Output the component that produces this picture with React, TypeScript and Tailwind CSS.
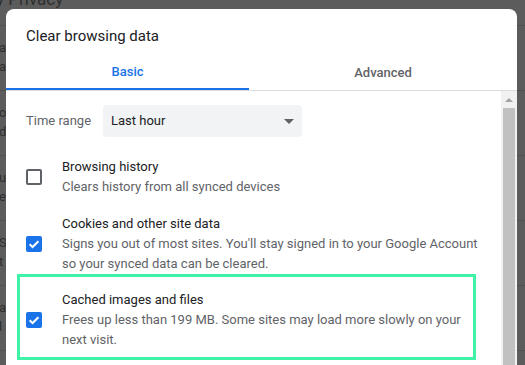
import { ReactNode } from "react";

const font = { fontFamily: "Roboto, 'Liberation Sans', sans-serif" };

function Checkbox({ checked }: { checked: boolean }) {
  if (!checked) {
    return <div className="w-4 h-4 shrink-0 rounded-[2px] border-2 border-[#5f6368]" />;
  }
  return (
    <div className="w-4 h-4 shrink-0 rounded-[2px] bg-[#1a73e8] flex items-center justify-center">
      <svg width="16" height="16" viewBox="0 0 16 16">
        <path d="M3.6 8.2 L6.6 11 L12.4 5.2" fill="none" stroke="#fff" strokeWidth="2" />
      </svg>
    </div>
  );
}

function Option({
  checked,
  title,
  children,
  className = "",
  highlight = false,
}: {
  checked: boolean;
  title: string;
  children: ReactNode;
  className?: string;
  highlight?: boolean;
}) {
  return (
    <div className={`relative flex items-center ${className}`}>
      <Checkbox checked={checked} />
      <div className="ml-5 text-[13px] leading-5">
        <div className="text-[#202124]">{title}</div>
        <div className="text-[#5f6368]">{children}</div>
      </div>
      {highlight && (
        <div className="absolute -left-[9px] -top-[8px] -bottom-[2px] right-[5px] border-[3px] border-[#3ff2a8]" />
      )}
    </div>
  );
}

const behindRows = [
  ["ar", "ar"],
  ["ok", "d"],
  ["u", "e"],
  ["S", "t"],
  ["a", "l"],
  ["", ""],
];

export default function App() {
  return (
    <div className="relative h-screen overflow-hidden bg-[#5c5c5c]" style={font}>
      {/* Page behind the scrim */}
      <div className="text-[#2f2f2f] text-[13px]">
        <div className="h-[25px] pt-[0px] -ml-[4px] text-[17px] leading-[10px] overflow-hidden">
          <div className="-mt-[6px]">y Privacy</div>
        </div>
        {behindRows.map((r, i) => (
          <div key={i} className="h-[65px] border-t border-[#505050] pt-[12px] leading-[19px] -ml-[1px]">
            <div>{r[0]}</div>
            <div>{r[1]}</div>
          </div>
        ))}
      </div>

      {/* Dialog */}
      <div className="absolute left-[6px] top-[9px] w-[511px] h-[400px] bg-white rounded-t-[8px] flex flex-col">
        <div className="pl-5 pt-[17px] text-[15px] leading-5 text-[#202124]">Clear browsing data</div>

        <div className="mt-[9px] flex border-b border-[#dadce0] text-[13px] font-medium">
          <div className="w-[243px] h-[35px] flex items-center justify-center border-b-2 border-[#1a73e8] text-[#1a73e8]">
            Basic
          </div>
          <div className="flex-1 h-[35px] flex items-center justify-center text-[#5f6368]">Advanced</div>
        </div>

        <div className="flex flex-1 min-h-0">
          <div className="flex-1 pl-5 pr-5 pt-[14px]">
            <div className="flex items-center text-[13px]">
              <div className="w-[77px] text-[#5f6368]">Time range</div>
              <div className="w-[199px] h-[32px] rounded-[4px] bg-[#f1f3f4] flex items-center justify-between pl-2 pr-[8px] text-[#202124]">
                <span>Last hour</span>
                <svg width="10" height="5" viewBox="0 0 10 5">
                  <path d="M0 0 L10 0 L5 5 Z" fill="#5f6368" />
                </svg>
              </div>
            </div>

            <Option checked={false} title="Browsing history" className="mt-[12px] pt-2 pb-[9px]">
              Clears history from all synced devices
            </Option>
            <Option checked title="Cookies and other site data" className="py-2">
              Signs you out of most sites. You'll stay signed in to your Google Account
              <br />
              so your synced data can be cleared.
            </Option>
            <Option checked highlight title="Cached images and files" className="py-2">
              Frees up less than 199 MB. Some sites may load more slowly on your
              <br />
              next visit.
            </Option>
          </div>

          {/* Scrollbar */}
          <div className="w-4 bg-[#f1f1f1] flex flex-col items-center">
            <div className="h-[17px] flex items-center justify-center">
              <svg width="8" height="4" viewBox="0 0 8 4">
                <path d="M0 4 L8 4 L4 0 Z" fill="#a3a3a3" />
              </svg>
            </div>
            <div className="w-[12px] flex-1 bg-[#c1c1c1]" />
          </div>
        </div>
      </div>
    </div>
  );
}
